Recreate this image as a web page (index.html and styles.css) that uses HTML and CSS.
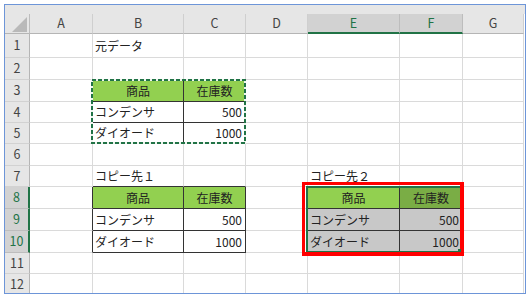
FILE: index.html
```html
<!DOCTYPE html>
<html lang="ja">
<head>
<meta charset="utf-8">
<title>Excel copy</title>
<link rel="stylesheet" href="styles.css">
</head>
<body>
<div class="frame">
  <div class="strip"></div>
  <div class="sheet">
    <div class="c corner"><svg class="tri" width="15" height="15" viewBox="0 0 15 15"><polygon points="15,0 15,15 0,15" fill="#b9b9b9"/></svg></div>
    <div class="c ch">A</div><div class="c ch">B</div><div class="c ch">C</div><div class="c ch">D</div><div class="c ch sel">E</div><div class="c ch sel">F</div><div class="c ch">G</div>

    <div class="c rh">1</div><div class="c"></div><div class="c l">元データ</div><div class="c"></div><div class="c"></div><div class="c"></div><div class="c"></div><div class="c"></div>

    <div class="c rh">2</div><div class="c"></div><div class="c bb"></div><div class="c bb"></div><div class="c"></div><div class="c"></div><div class="c"></div><div class="c"></div>

    <div class="c rh">3</div><div class="c br"></div><div class="c g m br bb">商品</div><div class="c g m br bb">在庫数</div><div class="c"></div><div class="c"></div><div class="c"></div><div class="c"></div>

    <div class="c rh">4</div><div class="c br"></div><div class="c l br bb">コンデンサ</div><div class="c r br bb">500</div><div class="c"></div><div class="c"></div><div class="c"></div><div class="c"></div>

    <div class="c rh">5</div><div class="c br"></div><div class="c l br bb">ダイオード</div><div class="c r br bb">1000</div><div class="c"></div><div class="c"></div><div class="c"></div><div class="c"></div>

    <div class="c rh">6</div><div class="c"></div><div class="c"></div><div class="c"></div><div class="c"></div><div class="c"></div><div class="c"></div><div class="c"></div>

    <div class="c rh">7</div><div class="c"></div><div class="c l bb">コピー先１</div><div class="c bb"></div><div class="c"></div><div class="c l bb">コピー先２</div><div class="c bb"></div><div class="c"></div>

    <div class="c rh sel">8</div><div class="c br"></div><div class="c g m br bb">商品</div><div class="c g m br bb">在庫数</div><div class="c br"></div><div class="c g m br bb">商品</div><div class="c gs m br bb">在庫数</div><div class="c"></div>

    <div class="c rh sel">9</div><div class="c br"></div><div class="c l br bb">コンデンサ</div><div class="c r br bb">500</div><div class="c br"></div><div class="c gy l br bb">コンデンサ</div><div class="c gy r br bb">500</div><div class="c"></div>

    <div class="c rh sel">10</div><div class="c br"></div><div class="c l br bb">ダイオード</div><div class="c r br bb">1000</div><div class="c br"></div><div class="c gy l br bb">ダイオード</div><div class="c gy r br bb">1000</div><div class="c"></div>

    <div class="c rh">11</div><div class="c"></div><div class="c"></div><div class="c"></div><div class="c"></div><div class="c"></div><div class="c"></div><div class="c"></div>

    <div class="c rh">12</div><div class="c"></div><div class="c"></div><div class="c"></div><div class="c"></div><div class="c"></div><div class="c"></div><div class="c"></div>

    <div class="marquee"><svg width="155" height="65" viewBox="0 0 155 65"><rect x="1" y="1" width="153" height="63" fill="none" stroke="#eef4ee" stroke-width="2"/><rect x="1" y="1" width="153" height="63" fill="none" stroke="#217346" stroke-width="2" stroke-dasharray="4 2"/></svg></div>
    <div class="selbox"></div>
    <div class="redbox"></div>
    <div class="handle"></div>
  </div>
</div>
</body>
</html>
```

FILE: styles.css
```css
html, body {
  margin: 0;
  padding: 0;
  background: #ffffff;
}

.frame {
  margin: 4px 0 0 4px;
  width: 520px;
  height: 288px;
  border: 1px solid #6d95d8;
  overflow: hidden;
  background: #ffffff;
  font-family: "Noto Sans CJK JP", "Noto Sans", sans-serif;
  font-size: 12px;
  color: #222222;
}

.strip {
  height: 9px;
  background: #e6e6e6;
}

.sheet {
  position: relative;
  display: grid;
  grid-template-columns: 25px 63px 91px 62px 62px 92px 63px 61px;
  grid-template-rows: 20px 24px 22px 22px 21px 21px 22px 21px 22px 22px 22px 21px 22px;
}

.c {
  box-sizing: border-box;
  border-right: 1px solid #dadada;
  border-bottom: 1px solid #dadada;
  display: flex;
  align-items: center;
  white-space: nowrap;
  overflow: hidden;
  line-height: 1;
}

.corner {
  background: #e6e6e6;
  border-right: 1px solid #bdbdbd;
  border-bottom: 1px solid #b5b5b5;
  align-items: flex-end;
  justify-content: flex-end;
  padding: 0 2px 1px 0;
}

.tri {
  display: block;
}

.ch {
  background: #e6e6e6;
  border-right: 1px solid #cfcfcf;
  border-bottom: 1px solid #b5b5b5;
  justify-content: center;
  color: #444444;
  font-size: 12.5px;
}

.ch.sel {
  background: #d2d2d2;
  border-bottom: 2px solid #217346;
  color: #217346;
  border-right-color: #bdbdbd;
}

.rh {
  background: #e6e6e6;
  border-right: 1px solid #b5b5b5;
  border-bottom: 1px solid #d2d2d2;
  justify-content: center;
  color: #444444;
  font-size: 12.5px;
}

.rh.sel {
  background: #d2d2d2;
  border-right: 2px solid #217346;
  color: #217346;
  border-bottom-color: #bdbdbd;
}

.l {
  padding-left: 2px;
}

.r {
  justify-content: flex-end;
  padding-right: 3px;
}

.m {
  justify-content: center;
}

.g {
  background: #92d050;
}

.gs {
  background: #7aad45;
}

.gy {
  background: #c8c8c8;
}

.br {
  border-right-color: #333333;
}

.bb {
  border-bottom-color: #333333;
}

.marquee {
  position: absolute;
  grid-row: 4 / 7;
  grid-column: 3 / 5;
  top: -1px;
  left: -2px;
  right: 0;
  bottom: 0;
  z-index: 2;
}

.marquee svg {
  display: block;
}

.selbox {
  position: absolute;
  grid-row: 9 / 12;
  grid-column: 6 / 8;
  top: -1px;
  left: -2px;
  right: 0;
  bottom: 0;
  box-sizing: border-box;
  border: 2px solid #217346;
  z-index: 2;
}

.redbox {
  position: absolute;
  grid-row: 9 / 12;
  grid-column: 6 / 8;
  top: -5px;
  left: -6px;
  right: -1px;
  bottom: -3px;
  box-sizing: border-box;
  border-style: solid;
  border-color: #ff0000;
  border-width: 3px 4px 4px 3px;
  z-index: 3;
}

.handle {
  position: absolute;
  grid-row: 9 / 12;
  grid-column: 6 / 8;
  right: 2px;
  bottom: 1px;
  width: 3px;
  height: 3px;
  background: #217346;
  z-index: 4;
}
```
